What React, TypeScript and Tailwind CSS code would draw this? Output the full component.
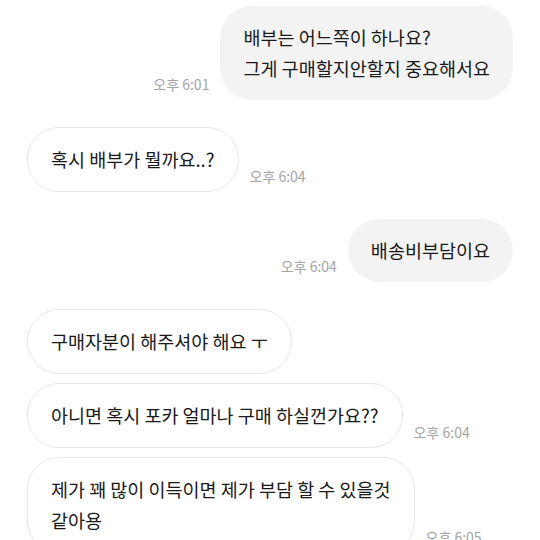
const messages = [
  { me: true, lines: ["배부는 어느쪽이 하나요?", "그게 구매할지안할지 중요해서요"], time: "오후 6:01" },
  { me: false, lines: ["혹시 배부가 뭘까요..?"], time: "오후 6:04" },
  { me: true, lines: ["배송비부담이요"], time: "오후 6:04" },
  { me: false, lines: ["구매자분이 해주셔야 해요 ㅜ"], time: "" },
  { me: false, lines: ["아니면 혹시 포카 얼마나 구매 하실껀가요??"], time: "오후 6:04" },
  { me: false, lines: ["제가 꽤 많이 이득이면 제가 부담 할 수 있을것", "같아용"], time: "오후 6:05" },
];

export default function App() {
  return (
    <div
      className="w-[540px] h-[540px] overflow-hidden bg-white px-[27px] pt-[6px] flex flex-col"
      style={{ fontFamily: '"Noto Sans CJK KR", "Noto Sans", sans-serif' }}
    >
      {messages.map((m, i) => {
        const prev = messages[i - 1];
        const grouped = prev && prev.me === m.me;
        return (
          <div
            key={i}
            className={`flex shrink-0 items-end gap-[11px] ${m.me ? "flex-row-reverse" : ""} ${i === 0 ? "" : grouped ? "mt-[9px]" : "mt-[27px]"}`}
          >
            <div
              className={`rounded-[32px] px-[23px] py-[16px] text-[18.5px] leading-[31px] text-[#1a1a1a] ${
                m.me ? "bg-[#f3f3f4]" : "bg-white border border-[#e6e6e6]"
              }`}
            >
              {m.lines.map((l, j) => (
                <div key={j}>{l}</div>
              ))}
            </div>
            {m.time && (
              <span className="text-[14px] text-[#a3a3a3] pb-[5px] whitespace-nowrap">{m.time}</span>
            )}
          </div>
        );
      })}
    </div>
  );
}
